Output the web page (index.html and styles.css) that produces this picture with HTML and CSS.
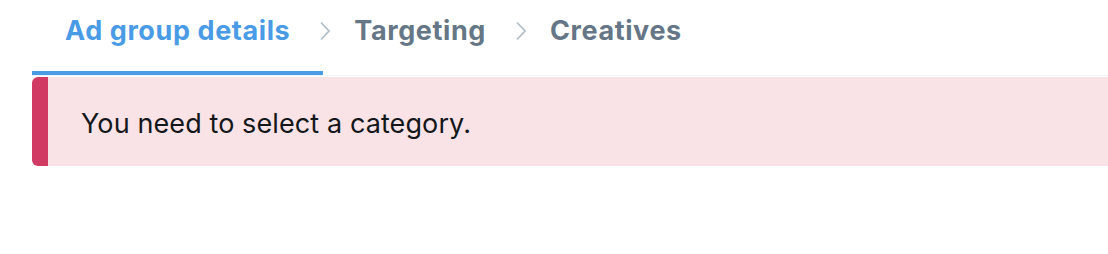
FILE: index.html
```html
<!DOCTYPE html>
<html>
<head>
<meta charset="utf-8">
<link rel="stylesheet" href="styles.css">
</head>
<body>
<div class="page">
  <nav class="steps">
    <div class="step active">Ad group details</div>
    <span class="chev"><svg width="12" height="20" viewBox="0 0 12 20"><path d="M2 1.5 L10 10 L2 18.5" fill="none" stroke="#b3bfc8" stroke-width="1.8"/></svg></span>
    <div class="step">Targeting</div>
    <span class="chev"><svg width="12" height="20" viewBox="0 0 12 20"><path d="M2 1.5 L10 10 L2 18.5" fill="none" stroke="#b3bfc8" stroke-width="1.8"/></svg></span>
    <div class="step">Creatives</div>
  </nav>
  <div class="alert">You need to select a category.</div>
</div>
</body>
</html>
```
FILE: styles.css
```css
* { box-sizing: border-box; }
html, body { margin: 0; padding: 0; background: #fff; }
body { font-family: Inter, "Liberation Sans", sans-serif; }
.page { padding: 0 0 0 32px; }
.steps {
  display: flex;
  align-items: center;
  border-bottom: 1px solid #f1f4f6;
  height: 76px;
}
.step {
  font-size: 27px;
  font-weight: 700;
  line-height: 30px;
  letter-spacing: 0.6px;
  color: #657786;
  padding: 16px 33px 25px 23px;
  border-bottom: 4px solid transparent;
  align-self: flex-start;
}
.step.active {
  color: #4a9be6;
  border-bottom-color: #4a9be6;
  padding-left: 33px;
}
.chev {
  display: flex;
  align-self: flex-start;
  margin: 21px 0 0 -4px;
}
.alert {
  margin-top: 1px;
  background: #fae3e6;
  border-left: 16px solid #d13a62;
  border-radius: 6px 0 0 6px;
  padding: 32px 33px 27px;
  font-size: 27px;
  line-height: 30px;
  letter-spacing: 0.1px;
  color: #14171a;
}
```
